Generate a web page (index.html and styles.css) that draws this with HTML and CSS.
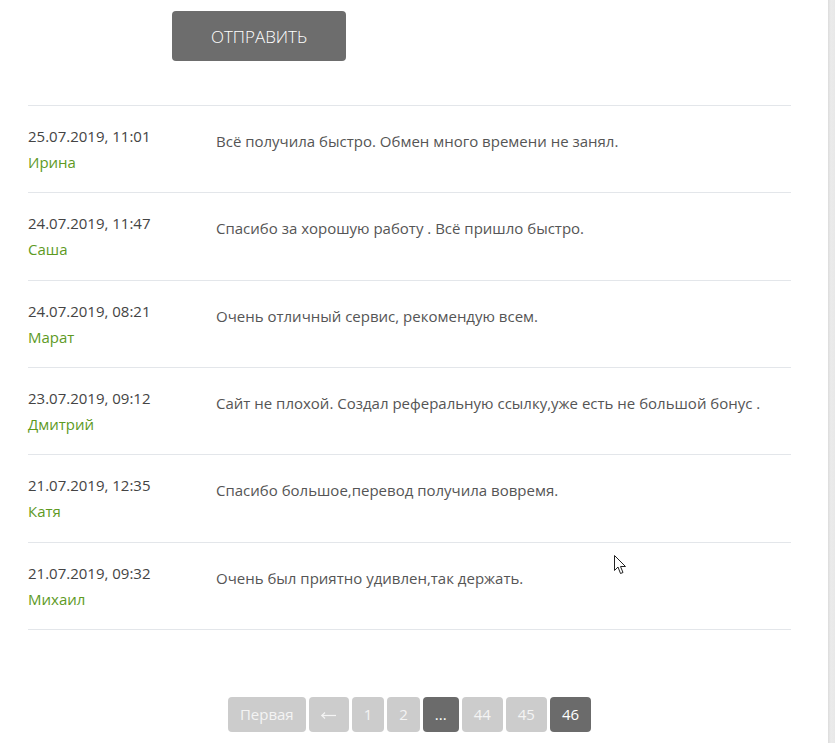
FILE: index.html
```html
<!DOCTYPE html>
<html lang="ru">
<head>
<meta charset="utf-8">
<title>Отзывы</title>
<link rel="stylesheet" href="styles.css">
</head>
<body>
<div class="page">
  <main class="content">
    <div class="form-actions">
      <button class="submit" type="button">ОТПРАВИТЬ</button>
    </div>
    <ul class="reviews">
      <li class="review">
        <div class="meta"><div class="date">25.07.2019, 11:01</div><div class="name">Ирина</div></div>
        <div class="text">Всё получила быстро. Обмен много времени не занял.</div>
      </li>
      <li class="review">
        <div class="meta"><div class="date">24.07.2019, 11:47</div><div class="name">Саша</div></div>
        <div class="text">Спасибо за хорошую работу . Всё пришло быстро.</div>
      </li>
      <li class="review">
        <div class="meta"><div class="date">24.07.2019, 08:21</div><div class="name">Марат</div></div>
        <div class="text">Очень отличный сервис, рекомендую всем.</div>
      </li>
      <li class="review">
        <div class="meta"><div class="date">23.07.2019, 09:12</div><div class="name">Дмитрий</div></div>
        <div class="text">Сайт не плохой. Создал реферальную ссылку,уже есть не большой бонус .</div>
      </li>
      <li class="review">
        <div class="meta"><div class="date">21.07.2019, 12:35</div><div class="name">Катя</div></div>
        <div class="text">Спасибо большое,перевод получила вовремя.</div>
      </li>
      <li class="review">
        <div class="meta"><div class="date">21.07.2019, 09:32</div><div class="name">Михаил</div></div>
        <div class="text">Очень был приятно удивлен,так держать.</div>
        <svg class="cursor" width="12" height="20" viewBox="0 0 12 20"><path d="M0.5 0.5 L0.5 15.5 L4 12 L6.5 18.5 L9 17.5 L6.5 11.5 L11.5 11.5 Z" fill="#fff" stroke="#222" stroke-width="1" stroke-linejoin="miter"/></svg>
      </li>
    </ul>
    <nav class="pager">
      <a class="pg">Первая</a>
      <a class="pg arrow" aria-label="←"><svg width="15" height="9" viewBox="0 0 15 9"><path d="M0.5 4.5 H15" stroke="#f4f4f4" stroke-width="1.2"/><path d="M4 1.5 L0.8 4.5 L4 7.5" fill="none" stroke="#f4f4f4" stroke-width="1.2"/></svg></a>
      <a class="pg">1</a>
      <a class="pg">2</a>
      <a class="pg dark">...</a>
      <a class="pg">44</a>
      <a class="pg">45</a>
      <a class="pg dark">46</a>
    </nav>
  </main>
  <div class="scrollbar"></div>
</div>
</body>
</html>
```
FILE: styles.css
```css
* { box-sizing: border-box; }
html, body { margin: 0; padding: 0; background: #fff; overflow: hidden; }
body {
  font-family: "Open Sans", "Noto Sans", sans-serif;
  font-size: 15px;
  color: #555;
}
.page {
  display: flex;
  min-height: 743px;
}
.content {
  flex: 1;
  padding: 11px 37px 0 28px;
}
.scrollbar {
  width: 7px;
  background: linear-gradient(to right, #dcdcdc, #ebebeb 40%, #e8e8e8);
}
.form-actions {
  padding-left: 144px;
}
.submit {
  display: block;
  width: 174px;
  height: 50px;
  border: 0;
  border-radius: 4px;
  background: #6d6d6d;
  color: #fff;
  font-family: "Open Sans", sans-serif;
  font-size: 17px;
  font-weight: 300;
  padding: 0;
}
.reviews {
  list-style: none;
  margin: 44px 0 0;
  padding: 0;
  border-bottom: 1px solid #e3e6ea;
}
.review {
  position: relative;
  display: flex;
  border-top: 1px solid #e3e6ea;
  padding: 17px 0 17.33px;
  line-height: 26px;
}
.meta {
  width: 188px;
  flex: none;
}
.date { color: #444; }
.name { color: #5e9a1f; }
.text {
  padding-top: 5px;
  color: #555;
}
.cursor {
  position: absolute;
  left: 586px;
  top: 12px;
}
.pager {
  display: flex;
  justify-content: center;
  gap: 3px;
  margin-top: 67px;
}
.pg {
  display: block;
  height: 35px;
  line-height: 35px;
  padding: 0 12px;
  border-radius: 4px;
  background: #cccccc;
  color: #f4f4f4;
  font-size: 15px;
}
.pg.arrow {
  display: flex;
  align-items: center;
  width: 40px;
  justify-content: center;
}
.pg.arrow svg { display: block; margin-top: 2px; }
.pg.dark {
  background: #6b6b6b;
  color: #fff;
}
```
